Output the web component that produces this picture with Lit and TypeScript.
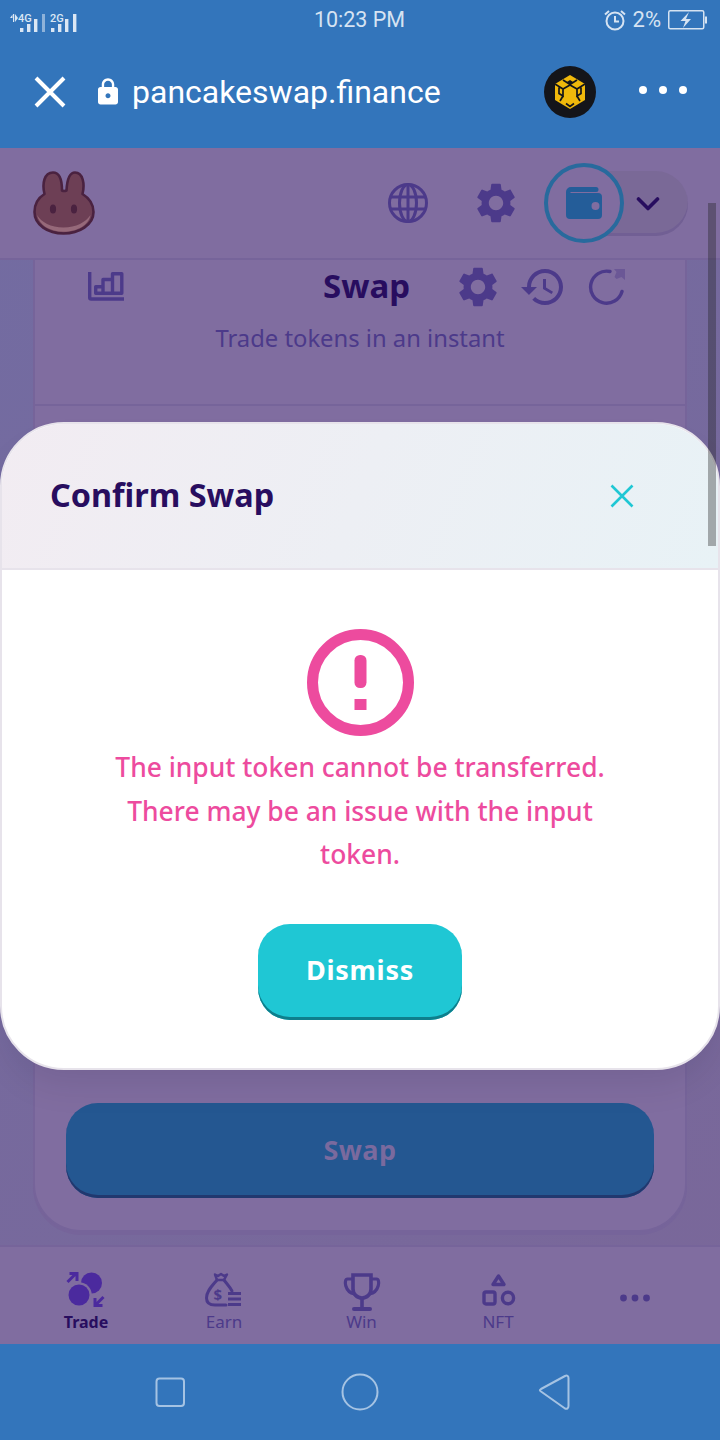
import { LitElement, html, css } from "lit";
import { customElement } from "lit/decorators.js";

const GEAR = "M19.14 12.94c.04-.3.06-.61.06-.94 0-.32-.02-.64-.07-.94l2.03-1.58c.18-.14.23-.41.12-.61l-1.92-3.32c-.12-.22-.37-.29-.59-.22l-2.39.96c-.5-.38-1.03-.7-1.62-.94l-.36-2.54c-.04-.24-.24-.41-.48-.41h-3.84c-.24 0-.43.17-.47.41l-.36 2.54c-.59.24-1.13.57-1.62.94l-2.39-.96c-.22-.08-.47 0-.59.22L2.74 8.87c-.12.21-.08.47.12.61l2.03 1.58c-.05.3-.09.63-.09.94s.02.64.07.94l-2.03 1.58c-.18.14-.23.41-.12.61l1.92 3.32c.12.22.37.29.59.22l2.39-.96c.5.38 1.03.7 1.62.94l.36 2.54c.05.24.24.41.48.41h3.84c.24 0 .44-.17.47-.41l.36-2.54c.59-.24 1.13-.56 1.62-.94l2.39.96c.22.08.47 0 .59-.22l1.92-3.32c.12-.22.07-.47-.12-.61l-2.01-1.58zM12 15.6c-1.98 0-3.6-1.62-3.6-3.6s1.62-3.6 3.6-3.6 3.6 1.62 3.6 3.6-1.62 3.6-3.6 3.6z";
const HISTORY = "M13 3c-4.97 0-9 4.03-9 9H1l3.89 3.89.07.14L9 12H6c0-3.87 3.13-7 7-7s7 3.13 7 7-3.13 7-7 7c-1.93 0-3.68-.79-4.94-2.06l-1.42 1.42C8.27 19.99 10.51 21 13 21c4.97 0 9-4.03 9-9s-4.03-9-9-9zm-1 5v5l4.28 2.54.72-1.21-3.5-2.08V8H12z";
const LOCK = "M18 8h-1V6c0-2.76-2.24-5-5-5S7 3.24 7 6v2H6c-1.1 0-2 .9-2 2v10c0 1.1.9 2 2 2h12c1.1 0 2-.9 2-2V10c0-1.1-.9-2-2-2zm-6 9c-1.1 0-2-.9-2-2s.9-2 2-2 2 .9 2 2-.9 2-2 2zm3.1-9H8.9V6c0-1.71 1.39-3.1 3.1-3.1 1.71 0 3.1 1.39 3.1 3.1v2z";

const P = "#4c3a8a";
const gear = (s: number) => html`<svg width=${s} height=${s} viewBox="2.4 2 19.2 20"><path fill=${P} d=${GEAR}/></svg>`;

@customElement("app-root")
export class AppRoot extends LitElement {
  static styles = css`
    :host { display: block; width: 720px; height: 1440px; position: relative; overflow: hidden; background: linear-gradient(139deg, #726ca2 0%, #7a6799 100%); font-family: "Noto Sans", sans-serif; }
    .page { display: flex; flex-direction: column; height: 1440px; }
    .chrome { background: #3375bb; height: 148px; flex: none; display: flex; flex-direction: column; }
    .status { height: 40px; display: grid; grid-template-columns: 1fr auto 1fr; align-items: center; padding: 0 13px 0 8px; color: #d6e3f2; font-family: Roboto, sans-serif; }
    .time { font-size: 21.5px; line-height: 38px; margin-left: 4px; }
    .sig { display: block; }
    .right { display: flex; align-items: center; justify-content: flex-end; gap: 6px; font-size: 22px; line-height: 38px; }
    .browser { flex: 1; display: flex; align-items: center; padding: 0 33px 5px 34px; }
    .url { color: #fff; font-family: Roboto, sans-serif; font-size: 32px; line-height: 40px; margin-left: 9px; flex: 1; }
    .bnb { margin-right: 43px; display: block; }
    .dots { display: flex; gap: 12px; margin-bottom: 4px; }
    .dots i { width: 8px; height: 8px; background: #fff; border-radius: 50%; display: block; }
    .nav { height: 112px; flex: none; background: #806da0; border-bottom: 2px solid #76649a; box-sizing: border-box; display: flex; align-items: center; padding: 0 32px 0 33px; }
    .logo { display: block; }
    .nav .spacer { flex: 1; }
    .nav .globe { margin-right: 48px; }
    .wallet { margin-left: 28px; position: relative; width: 144px; height: 65px; }
    .pill { position: absolute; left: 40px; right: 0; top: 0; bottom: 0; background: #7a6997; border-radius: 0 33px 33px 0; box-shadow: inset 0 -3px 0 #715f94; }
    .ring { position: absolute; left: 0; top: -7.5px; width: 80px; height: 80px; box-sizing: border-box; border: 4px solid #286a9d; border-radius: 50%; background: #806da0; display: flex; align-items: center; justify-content: center; }
    .chev { position: absolute; left: 92px; top: 25px; }
    .main { flex: 1; padding: 0 33px 13px; display: flex; min-height: 0; }
    .card { flex: 1; background: #806da0; border: 2px solid #76649a; border-top: 0; border-radius: 0 0 48px 48px; box-shadow: 0 3px 0 #76649a; display: flex; flex-direction: column; box-sizing: border-box; }
    .cardhead { height: 146px; border-bottom: 2px solid #76649a; box-sizing: border-box; flex: none; }
    .cardrow { display: flex; align-items: center; height: 54px; padding: 0 0 0 53px; }
    .cardrow .chart { margin-right: 199px; }
    .cardrow h2 { margin: -2px 48px 0 0; font-size: 33px; line-height: 54px; font-weight: 700; color: #280d5f; }
    .icons { display: flex; align-items: center; gap: 23px; }
    .sub { text-align: center; font-size: 23.8px; line-height: 32px; color: #4c3a8a; margin-top: 8px; }
    .cardbody { flex: 1; }
    .swapbtn { height: 95px; margin: 0 31px 32px; flex: none; box-sizing: border-box; padding-bottom: 2px; background: #245791; border-radius: 32px; box-shadow: inset 0 -3px 0 #21386f; color: #7a6a9e; font-size: 27px; font-weight: 700; display: flex; align-items: center; justify-content: center; letter-spacing: .5px; }
    .tabs { height: 99px; flex: none; background: #806da0; border-top: 2px solid #76649a; box-sizing: border-box; padding-left: 17px; display: grid; grid-template-columns: 138px 138px 137px 136px 138px; }
    .tab { display: flex; flex-direction: column; align-items: center; color: #4c3a8a; font-size: 17px; line-height: 22px; padding-top: 25px; }
    .tab svg { display: block; height: 40px; }
    .tab span { margin-top: -1px; }
    .tab.on { color: #280d5f; font-weight: 700; font-size: 16px; }
    .android { height: 96px; flex: none; background: #3375bb; }
    .android svg { display: block; }
    .overlay { position: absolute; left: 0; top: 422px; width: 720px; height: 648px; box-sizing: border-box; background: #fff; border: 2px solid #e7e3eb; border-radius: 64px; overflow: hidden; display: flex; flex-direction: column; }
    .shade { position: absolute; left: 0; top: 422px; width: 720px; height: 648px; border-radius: 64px; box-shadow: 0 20px 36px -8px rgba(14,14,44,.1); }
    .mhead { height: 146px; flex: none; box-sizing: border-box; background: linear-gradient(111.68deg, #f2ecf2 0%, #e8f2f6 100%); border-bottom: 2px solid #e7e3eb; display: flex; align-items: center; justify-content: space-between; padding: 0 84px 0 48px; }
    .mhead h1 { margin: -4px 0 0; font-size: 32.4px; line-height: 44px; font-weight: 700; color: #280d5f; }
    .mbody { flex: 1; display: flex; flex-direction: column; align-items: center; padding-top: 59px; }
    .msg { width: 520px; text-align: center; color: #ed4b9e; font-size: 26.4px; font-weight: 500; line-height: 43.5px; margin-top: 10px; }
    .dismiss { margin-top: 47px; width: 204px; height: 96px; box-sizing: border-box; padding-bottom: 4px; background: #1fc7d4; border-radius: 32px; box-shadow: inset 0 -3px 0 #0e7f8c; color: #fff; font-size: 27px; font-weight: 700; display: flex; align-items: center; justify-content: center; letter-spacing: .7px; }
    .scroll { position: absolute; left: 708px; top: 203px; width: 8px; height: 343px; background: rgba(30,30,30,.35); }
  `;

  render() {
    return html`<div class="page">
      <div class="chrome">
        <div class="status">
          <svg class="sig" width="72" height="30" viewBox="8 0 72 30">
            <g fill="#dbe7f4">
              <path d="M10 13 12.500 9.500V13ZM13 9h1.200v8H13ZM15 9v8L18 13Z"/>
              <text x="18" y="17" font-size="11" font-weight="500" font-family="Roboto, sans-serif">4G</text>
              <text x="50" y="17" font-size="11" font-weight="500" font-family="Roboto, sans-serif">2G</text>
              <rect x="20" y="23" width="3.400" height="4"/><rect x="27" y="19" width="3.400" height="8"/><rect x="34" y="14" width="3.400" height="13"/>
              <rect x="42" y="9" width="3" height="18" fill="#8eb2d9"/>
              <rect x="51" y="23" width="3.400" height="4"/><rect x="58" y="19" width="3.400" height="8"/><rect x="65" y="14" width="3.400" height="13"/><rect x="73" y="9" width="3.400" height="18"/>
            </g>
          </svg>
          <div class="time">10:23 PM</div>
          <div class="right">
            <svg width="24" height="24" viewBox="0 0 24 24" fill="none" stroke="#d6e3f2" stroke-width="2"><circle cx="12" cy="13" r="8.500"/><path d="M12 8v5.500h4M2 6.500 6 3M22 6.500 18 3"/></svg>
            <span style="margin-right:1px">2%</span>
            <svg width="39" height="20" viewBox="0 0 39 20"><rect x=".75" y=".75" width="35" height="18" rx="1.500" fill="none" stroke="#d6e3f2" stroke-width="1.500"/><rect x="37" y="6.500" width="2" height="7" fill="#d6e3f2"/><path d="M21 2 12.500 11h5L15 18l8-9h-5z" fill="#d6e3f2"/></svg>
          </div>
        </div>
        <div class="browser">
          <svg width="32" height="32" viewBox="0 0 32 32" fill="none" stroke="#fff" stroke-width="4"><path d="M2 2 30 30M30 2 2 30"/></svg>
          <svg style="margin-left:27px" width="30" height="30" viewBox="0 0 24 24"><path fill="#fff" d=${LOCK}/></svg>
          <div class="url">pancakeswap.finance</div>
          <svg class="bnb" width="52" height="52" viewBox="0 0 52 52">
            <circle cx="26" cy="26" r="26" fill="#14151a"/>
            <path d="M26 9 41 18V34L26 43 11 34V18Z" fill="#f0b90b"/>
            <g fill="none" stroke="#14151a" stroke-width="1.700">
              <path d="M19 14 26 18.500 33 14M11 18 19 23V30L15 27.500V21.500M41 18 33 23V30L37 27.500V21.500"/>
              <path d="M19 23 26 19M33 23 26 19M19 30 16 35M33 30 36 35M22 37.500 26 40.500 30 37.500"/>
            </g>
            <path d="M26 14 29.500 16.200 26 18.400 22.500 16.200Z" fill="#14151a"/>
          </svg>
          <div class="dots"><i></i><i></i><i></i></div>
        </div>
      </div>
      <div class="nav">
        <svg class="logo" width="62" height="64" viewBox="0 0 62 64">
          <path d="M11.500 23C9 13 11 1.500 20 1.500 27 1.500 29 10 29 19.500Q31 20.500 33.500 19.500C34 10 36 1.500 42 1.500 50 1.500 52 13 49.500 23 56 27 60.500 33 60.500 41 60.500 54 46 62.500 30.500 62.500 15 62.500 1.500 54 1.500 41 1.500 33 5 27 11.500 23Z" fill="#6d3f55" stroke="#4a2240" stroke-width="2.600" stroke-linejoin="round"/>
          <path d="M4 44C8 51 18 56.500 30.500 56.500S53 51 57.500 44C56 54 44 60.800 30.500 60.800S6 54 4 44Z" fill="#96697a"/>
          <ellipse cx="20" cy="38" rx="3.100" ry="4.500" fill="#4a2240"/><ellipse cx="41" cy="38" rx="3.100" ry="4.500" fill="#4a2240"/>
        </svg>
        <div class="spacer"></div>
        <svg class="globe" width="40" height="40" viewBox="0 0 40 40" fill="none" stroke=${P} stroke-width="3"><circle cx="20" cy="20" r="18.500"/><ellipse cx="20" cy="20" rx="8.500" ry="18.500"/><path d="M2.500 14h35M2.500 26h35M20 1.500v37"/></svg>
        ${gear(40)}
        <div class="wallet">
          <div class="pill"></div>
          <div class="ring">
            <svg width="36" height="32" viewBox="0 0 36 32"><path fill="#245d99" fill-rule="evenodd" d="M5 0h25a2.500 2.500 0 0 1 0 5H4.500v1H32a4 4 0 0 1 4 4v18a4 4 0 0 1-4 4H4a4 4 0 0 1-4-4V5a5 5 0 0 1 5-5Zm24.500 15a4 4 0 1 0 0 8 4 4 0 0 0 0-8Z"/></svg>
          </div>
          <svg class="chev" width="24" height="16" viewBox="0 0 24 16" fill="none" stroke="#280d5f" stroke-width="3.600" stroke-linecap="round" stroke-linejoin="round"><path d="M2.500 3 12 12.500 21.500 3"/></svg>
        </div>
      </div>
      <div class="main">
        <div class="card">
          <div class="cardhead">
            <div class="cardrow">
              <svg class="chart" width="36" height="30" viewBox="0 0 36 30" fill="none" stroke=${P} stroke-width="3.400" stroke-linejoin="round"><path d="M1.700 0v25.500a1.500 1.500 0 0 0 1.500 1.500h32.500" stroke-linecap="round"/><path d="M7.700 21.300V14.700H15V21.300ZM15 21.300V7.500H24.500V21.300ZM24.500 21.300V1.700H33.800V21.300Z"/></svg>
              <h2>Swap</h2>
              <div class="icons">
                ${gear(40)}
                <svg width="42" height="38" viewBox="1 3 21 18"><path fill=${P} d=${HISTORY}/></svg>
                <svg style="margin-left:2px" width="38" height="38" viewBox="0 0 38 38"><path d="M34 23.500A16 16 0 1 1 22 3.500" fill="none" stroke=${P} stroke-width="3.400" stroke-linecap="round"/><path d="M26 1h11v11l-3.500-3-5 2-2-2 2-5Z" fill="#6b5796"/></svg>
              </div>
            </div>
            <div class="sub">Trade tokens in an instant</div>
          </div>
          <div class="cardbody"></div>
          <div class="swapbtn">Swap</div>
        </div>
      </div>
      <div class="tabs">
        <div class="tab on">
          <svg width="40" height="40" viewBox="0 0 40 40">
            <circle cx="25.500" cy="11" r="10.500" fill="#4b2a9e"/>
            <circle cx="13" cy="23" r="12.800" fill="#806da0"/>
            <circle cx="13" cy="23" r="10.500" fill="#4b2a9e"/>
            <path d="M1.500 10 9.500 2M3.500 1.500h7.500v7.500M37.500 25 29.500 33M29 26v7.500h7.500" fill="none" stroke="#4b2a9e" stroke-width="3"/>
          </svg>
          <span>Trade</span>
        </div>
        <div class="tab">
          <svg width="40" height="40" viewBox="0 0 40 40" fill="none" stroke=${P} stroke-width="3">
            <path d="M13 8C8 14 2.500 19 2.500 26 2.500 31 6 33 11 33H22M20 8C23 12 26 15 28 19" stroke-linecap="round"/>
            <path d="M11 2.500 14 4 17 2 20 4 23 2.500 20 8H13Z" stroke-width="2.400" stroke-linejoin="round"/>
            <path d="M24 21.500H37M24 27H37M24 32.500H37"/>
            <text x="9.500" y="28" font-size="15" font-weight="700" fill=${P} stroke="none" font-family="Noto Sans, sans-serif">$</text>
          </svg>
          <span>Earn</span>
        </div>
        <div class="tab">
          <svg width="40" height="40" viewBox="0 0 40 40" fill="none" stroke=${P} stroke-width="3.600"><path d="M11 3h18v14a9 9 0 0 1-18 0Z"/><path d="M11 7H5.500c-4 0-3 13 7 15M29 7h5.500c4 0 3 13-7 15" stroke-width="3.200"/><path d="M20 26v9"/><path d="M12 37h16" stroke-width="4" stroke-linecap="round"/></svg>
          <span>Win</span>
        </div>
        <div class="tab">
          <svg width="36" height="40" viewBox="0 0 36 40" fill="none" stroke=${P} stroke-width="3.400" stroke-linejoin="round"><path d="M18.500 4 24 12.500H13Z"/><rect x="4" y="20" width="11" height="12" rx="2"/><ellipse cx="28" cy="26" rx="5.600" ry="5.800"/></svg>
          <span>NFT</span>
        </div>
        <div class="tab">
          <svg width="30" height="40" viewBox="0 0 30 40" fill=${P}><circle cx="3.500" cy="26" r="3.400"/><circle cx="15" cy="26" r="3.400"/><circle cx="26.500" cy="26" r="3.400"/></svg>
        </div>
      </div>
      <div class="android">
        <svg width="720" height="96" viewBox="0 0 720 96" fill="none" stroke="#a5c3e3" stroke-width="2"><rect x="156.500" y="34.500" width="27.500" height="27.500" rx="3"/><circle cx="360" cy="48" r="17.500"/><path d="M541 47.500c-1.500-1 -1.500-1.500 0-2.500l24-13c2-1 3.500 0 3.500 2v28c0 2-1.500 3.500-3.500 2.500Z" stroke-linejoin="round"/></svg>
      </div>
    </div>
    <div class="shade"></div>
    <div class="overlay">
      <div class="mhead">
        <h1>Confirm Swap</h1>
        <svg width="24" height="24" viewBox="0 0 24 24" fill="none" stroke="#1fc7d4" stroke-width="2.600"><path d="M1.500 1.500 22.500 22.500M22.500 1.500 1.500 22.500"/></svg>
      </div>
      <div class="mbody">
        <svg width="107" height="107" viewBox="0 0 107 107"><circle cx="53.500" cy="53.500" r="48" fill="none" stroke="#ed4b9e" stroke-width="11"/><rect x="47.500" y="26" width="12" height="33" rx="5.500" fill="#ed4b9e"/><rect x="47.500" y="70" width="12" height="11" fill="#ed4b9e"/></svg>
        <div class="msg">The input token cannot be transferred. There may be an issue with the input token.</div>
        <div class="dismiss">Dismiss</div>
      </div>
    </div>
    <div class="scroll"></div>`;
  }
}
